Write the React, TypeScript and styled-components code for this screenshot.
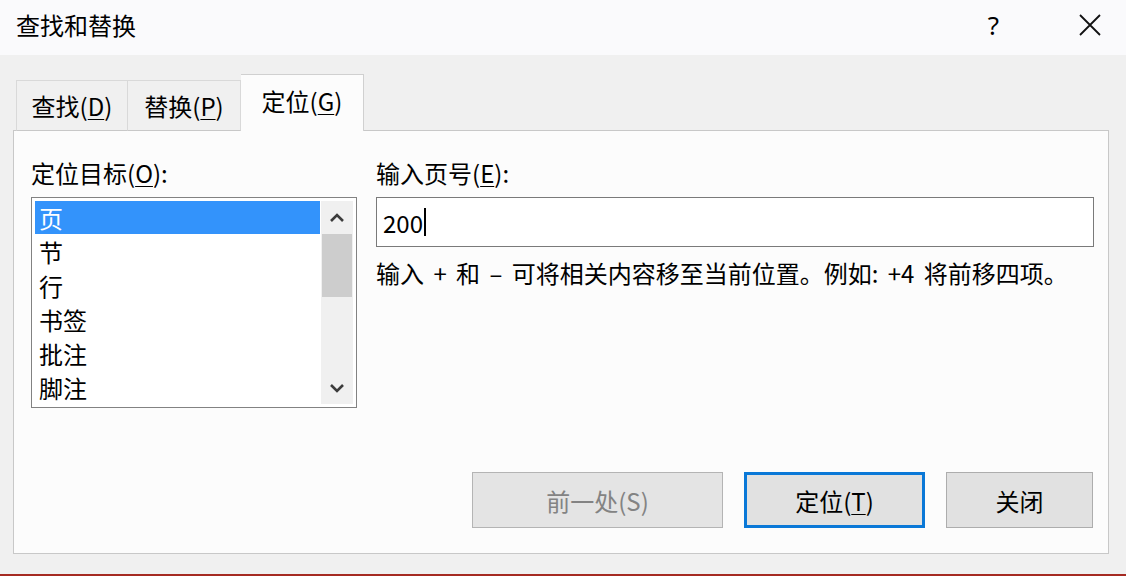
import styled, { createGlobalStyle } from 'styled-components'

const GlobalStyle = createGlobalStyle`
  html, body {
    margin: 0;
    padding: 0;
    background: #f0f0f0;
  }
  body {
    font-family: "Noto Sans CJK SC", "Noto Sans", sans-serif;
    color: #000;
  }
`

const targets = ['页', '节', '行', '书签', '批注', '脚注']

const Chevron = ({ down }: { down?: boolean }) => (
  <svg width="16" height="12" viewBox="0 0 16 12">
    <path
      d={down ? 'M2 3 L8 9 L14 3' : 'M2 9 L8 3 L14 9'}
      fill="none"
      stroke="#3c3c3c"
      strokeWidth="2.6"
    />
  </svg>
)

const CloseIcon = () => (
  <svg width="24" height="24" viewBox="0 0 24 24">
    <path d="M2 2 L22 22 M22 2 L2 22" stroke="#111" strokeWidth="1.8" fill="none" />
  </svg>
)

const App = () => {
  return (
    <>
      <GlobalStyle />
      <Dialog>
        <TitleBar>
          <Title>查找和替换</Title>
          <TitleActions>
            <HelpMark>?</HelpMark>
            <CloseBtn><CloseIcon /></CloseBtn>
          </TitleActions>
        </TitleBar>
        <Body>
          <TabRow>
            <Tab $width={112}>查找(<u>D</u>)</Tab>
            <Tab $width={113}>替换(<u>P</u>)</Tab>
            <Tab $width={123} $active>定位(<u>G</u>)</Tab>
          </TabRow>
          <Panel>
            <Columns>
              <Column>
                <Label>定位目标(<u>O</u>):</Label>
                <ListBox>
                  <Items>
                    {targets.map((t, i) => (
                      <Item key={t} $selected={i === 0}>{t}</Item>
                    ))}
                  </Items>
                  <ScrollBar>
                    <Arrow><Chevron /></Arrow>
                    <Thumb />
                    <Track />
                    <Arrow><Chevron down /></Arrow>
                  </ScrollBar>
                </ListBox>
              </Column>
              <Column>
                <Label>输入页号(<u>E</u>):</Label>
                <TextBox>200<Caret /></TextBox>
                <Hint>输入 + 和 – 可将相关内容移至当前位置。例如: +4 将前移四项。</Hint>
              </Column>
            </Columns>
            <ButtonRow>
              <Button $width={251} disabled>前一处(S)</Button>
              <Button $width={181} $default>定位(<u>T</u>)</Button>
              <Button $width={147}>关闭</Button>
            </ButtonRow>
          </Panel>
        </Body>
        <BottomEdge />
      </Dialog>
    </>
  )
}

const Dialog = styled.div`
  width: 1126px;
  height: 576px;
  display: flex;
  flex-direction: column;
  background: #f0f0f0;
  overflow: hidden;
`

const TitleBar = styled.div`
  height: 55px;
  flex-shrink: 0;
  background: #fafafc;
  display: flex;
  align-items: center;
  justify-content: space-between;
  padding: 0 24px 0 16px;
  box-sizing: border-box;
`

const Title = styled.div`
  font-size: 24px;
  line-height: 30px;
  margin-top: -6px;
`

const TitleActions = styled.div`
  display: flex;
  align-items: center;
  gap: 79px;
  margin-top: -6px;
`

const HelpMark = styled.span`
  font-family: "Noto Sans", sans-serif;
  font-size: 26px;
  line-height: 30px;
`

const CloseBtn = styled.span`
  display: flex;
  width: 24px;
  height: 24px;
`

const Body = styled.div`
  flex: 1;
  display: flex;
  flex-direction: column;
  padding: 19px 17px 20px 13px;
`

const TabRow = styled.div`
  display: flex;
  align-items: flex-end;
  padding-left: 3px;
  margin-bottom: -1px;
  position: relative;
  z-index: 1;
  height: 57px;
`

const Tab = styled.div<{ $width: number; $active?: boolean }>`
  width: ${p => p.$width}px;
  height: ${p => (p.$active ? 57 : 51)}px;
  box-sizing: border-box;
  display: flex;
  align-items: center;
  justify-content: center;
  font-size: 24px;
  padding-bottom: ${p => (p.$active ? 6 : 0)}px;
  background: ${p => (p.$active ? '#fcfcfc' : '#f0f0f0')};
  border: 1px solid ${p => (p.$active ? '#d0d0d0' : '#d9d9d9')};
  border-bottom: ${p => (p.$active ? 'none' : '1px solid #c8c8c8')};
  & + & {
    border-left: none;
  }

  u {
    text-underline-offset: 3px;
    text-decoration-thickness: 1px;
  }
`

const Panel = styled.div`
  height: 424px;
  box-sizing: border-box;
  background: #fcfcfc;
  border: 1px solid #c8c8c8;
  display: flex;
  flex-direction: column;
  padding: 27px 14px 25px 17px;
`

const Columns = styled.div`
  display: grid;
  grid-template-columns: 326px 1fr;
  column-gap: 19px;
`

const Column = styled.div`
  display: flex;
  flex-direction: column;
`

const Label = styled.div`
  font-size: 24px;
  line-height: 30px;
  margin-bottom: 9px;

  u {
    text-underline-offset: 3px;
    text-decoration-thickness: 1px;
  }
`

const ListBox = styled.div`
  height: 211px;
  box-sizing: border-box;
  border: 1px solid #828282;
  background: #fff;
  padding: 3px;
  display: flex;
  gap: 1px;
`

const Items = styled.div`
  flex: 1;
  display: flex;
  flex-direction: column;
`

const Item = styled.div<{ $selected?: boolean }>`
  height: 34px;
  flex-shrink: 0;
  display: flex;
  align-items: center;
  padding-left: 4px;
  font-size: 24px;
  color: ${p => (p.$selected ? '#fff' : '#000')};
  background: ${p => (p.$selected ? '#3393fb' : 'transparent')};
  &:first-child {
    height: 33px;
  }
`

const ScrollBar = styled.div`
  width: 32px;
  background: #f0f0f0;
  display: flex;
  flex-direction: column;
`

const Arrow = styled.div`
  height: 33px;
  display: flex;
  align-items: center;
  justify-content: center;
  flex-shrink: 0;
`

const Thumb = styled.div`
  height: 63px;
  margin: 0 1px;
  background: #cdcdcd;
`

const Track = styled.div`
  flex: 1;
`

const TextBox = styled.div`
  height: 50px;
  box-sizing: border-box;
  border: 1px solid #7a7a7a;
  background: #fff;
  display: flex;
  align-items: center;
  padding-left: 6px;
  font-size: 24px;
`

const Caret = styled.span`
  display: inline-block;
  width: 2px;
  height: 28px;
  margin-left: 1px;
  background: #000;
`

const Hint = styled.div`
  margin-top: 11px;
  font-size: 24px;
  line-height: 30px;
  word-spacing: 4px;
  white-space: nowrap;
`

const ButtonRow = styled.div`
  margin-top: auto;
  display: flex;
  justify-content: flex-end;
  gap: 21px;
  padding-right: 1px;
`

const Button = styled.button<{ $width: number; $default?: boolean }>`
  width: ${p => p.$width}px;
  height: 56px;
  box-sizing: border-box;
  font-family: "Noto Sans CJK SC", "Noto Sans", sans-serif;
  font-size: 24px;
  color: #000;
  background: #e1e1e1;
  border: ${p => (p.$default ? '3px solid #0a78d7' : '1px solid #adadad')};
  padding: 0;

  &:disabled {
    color: #838383;
    background: #e4e4e4;
    border-color: #b4b4b4;
  }

  u {
    text-underline-offset: 3px;
    text-decoration-thickness: 1px;
  }
`

const BottomEdge = styled.div`
  height: 3px;
  flex-shrink: 0;
  background: #a52a22;
`

export default App
